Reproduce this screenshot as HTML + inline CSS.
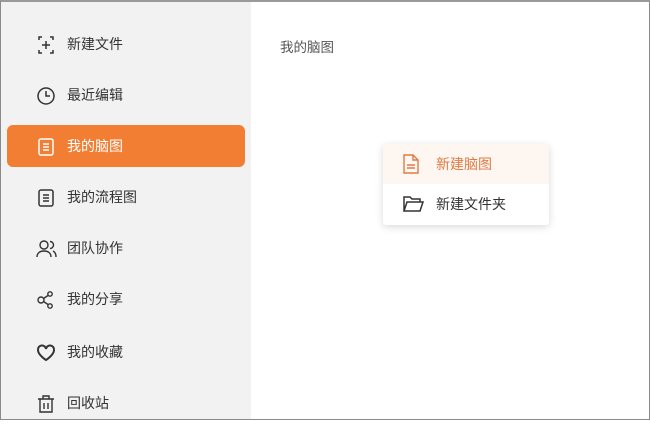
<!DOCTYPE html>
<html><head><meta charset="utf-8"><style>
*{margin:0;padding:0;box-sizing:border-box}
body{width:650px;height:420px;overflow:hidden;background:#fff;font-family:"Liberation Sans","Noto Sans CJK SC",sans-serif;position:relative}
.frame{position:absolute;left:0;top:0;width:650px;height:420px;border:1px solid #8a8a8a;border-top:2px solid #9a9a9a;pointer-events:none;z-index:5}
.side{position:absolute;left:1px;top:2px;width:250px;height:417px;background:#f2f2f2}
.item{position:absolute;left:6px;width:238px;height:42px;border-radius:6px;display:flex;align-items:center;font-size:14px;color:#333}
.item svg{position:absolute;left:29px;top:12px}
.item span{position:absolute;left:60px}
.active{background:#f27e33;color:#fff}
.title{position:absolute;left:280px;top:36px;font-size:13.5px;color:#555}
.menu{position:absolute;left:383px;top:144px;width:166px;height:81px;background:#fff;box-shadow:0 2px 8px rgba(0,0,0,.15);border-radius:3px;overflow:hidden}
.mi{height:40px;display:flex;align-items:center;font-size:14px;color:#333;position:relative}
.mi svg{position:absolute;left:19px}
.mi span{position:absolute;left:53px}
</style></head><body>
<div class="side">
<div class="item" style="top:21px"><svg width="20" height="20" viewBox="0 0 20 20" fill="none" stroke="#333" stroke-width="1.5"><path d="M6 2H3v3M14 2h3v3M6 18H3v-3M14 18h3v-3M10 6v8M6 10h8"/></svg><span>新建文件</span></div>
<div class="item" style="top:72px"><svg width="20" height="20" viewBox="0 0 20 20" fill="none" stroke="#333" stroke-width="1.5"><circle cx="10" cy="10" r="8"/><path d="M10 5v5h4"/></svg><span>最近编辑</span></div>
<div class="item active" style="top:123px"><svg width="20" height="20" viewBox="0 0 20 20" fill="none" stroke="#fff" stroke-width="1.5"><rect x="3" y="2" width="14" height="16" rx="2"/><path d="M7 7h6M7 10h6M7 13h6"/></svg><span>我的脑图</span></div>
<div class="item" style="top:174px"><svg width="20" height="20" viewBox="0 0 20 20" fill="none" stroke="#333" stroke-width="1.5"><rect x="3" y="2" width="14" height="16" rx="2"/><path d="M7 7h6M7 10h6M7 13h6"/></svg><span>我的流程图</span></div>
<div class="item" style="top:225px"><svg width="22" height="20" viewBox="0 0 22 20" fill="none" stroke="#333" stroke-width="1.4"><circle cx="8" cy="6" r="4"/><path d="M1 18c0-4 3-6 7-6s7 2 7 6M14 2.5a3.5 3.5 0 010 7M17 12c2 1 3 3 3 6"/></svg><span>团队协作</span></div>
<div class="item" style="top:276px"><svg width="20" height="20" viewBox="0 0 20 20" fill="none" stroke="#333" stroke-width="1.4"><circle cx="5" cy="10" r="3"/><circle cx="14" cy="4" r="2.2"/><circle cx="14" cy="16" r="2.2"/><path d="M7.5 8.5l4.5-3M7.5 11.5l4.5 3"/></svg><span>我的分享</span></div>
<div class="item" style="top:329px"><svg width="20" height="20" viewBox="0 0 20 20" fill="none" stroke="#333" stroke-width="2"><path d="M10 17S2 12 2 7a4 4 0 018-1 4 4 0 018 1c0 5-8 10-8 10z"/></svg><span>我的收藏</span></div>
<div class="item" style="top:380px"><svg width="20" height="20" viewBox="0 0 20 20" fill="none" stroke="#333" stroke-width="1.4"><path d="M2 5h16M7 5V2h6v3M4 5v13h12V5M8 9v6M12 9v6"/></svg><span>回收站</span></div>
</div>
<div class="title">我的脑图</div>
<div class="menu">
<div class="mi" style="background:#fdf6f1;color:#e07b45"><svg width="18" height="20" viewBox="0 0 18 20" fill="none" stroke="#e07b45" stroke-width="1.4"><path d="M2 1h9l5 5v13H2zM11 1v5h5M5 11h8M5 14h8"/></svg><span>新建脑图</span></div>
<div class="mi"><svg width="22" height="18" viewBox="0 0 22 18" fill="none" stroke="#333" stroke-width="1.5"><path d="M2 16V2h6l2 2h8v3M2 16l3-9h16l-3 9z"/></svg><span>新建文件夹</span></div>
</div>
<div class="frame"></div>
</body></html>
